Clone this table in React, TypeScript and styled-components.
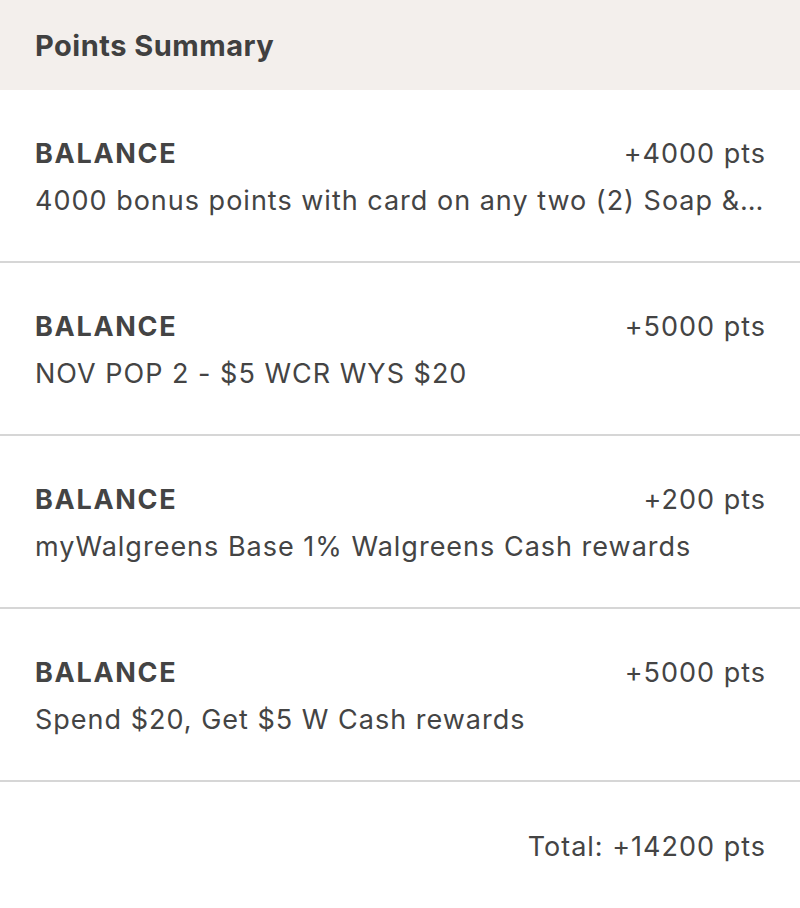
import styled, { createGlobalStyle } from "styled-components";

const GlobalStyle = createGlobalStyle`
  body {
    margin: 0;
    background: #ffffff;
    font-family: Inter, "Noto Sans", sans-serif;
    color: #444444;
  }
`;

type Entry = {
  label: string;
  points: number;
  description: string;
};

const entries: Entry[] = [
  {
    label: "BALANCE",
    points: 4000,
    description: "4000 bonus points with card on any two (2) Soap & Body Wash",
  },
  { label: "BALANCE", points: 5000, description: "NOV POP 2 - $5 WCR WYS $20" },
  {
    label: "BALANCE",
    points: 200,
    description: "myWalgreens Base 1% Walgreens Cash rewards",
  },
  {
    label: "BALANCE",
    points: 5000,
    description: "Spend $20, Get $5 W Cash rewards",
  },
];

export default function App() {
  const total = entries.reduce((sum, e) => sum + e.points, 0);

  return (
    <>
      <GlobalStyle />
      <Container>
        <Header>
          <Title>Points Summary</Title>
        </Header>
        <List>
          {entries.map((item, index) => (
            <Row key={index}>
              <TopLine>
                <Label>{item.label}</Label>
                <Points>+{item.points} pts</Points>
              </TopLine>
              <Description>{item.description}</Description>
            </Row>
          ))}
        </List>
        <Footer>Total: +{total} pts</Footer>
      </Container>
    </>
  );
}

const Container = styled.section`
  width: 800px;
  display: flex;
  flex-direction: column;
`;

const Header = styled.header`
  height: 90px;
  background-color: #f3efec;
  display: flex;
  align-items: center;
  padding: 0 35px;
  box-sizing: border-box;
`;

const Title = styled.h2`
  margin: 0;
  font-size: 29px;
  font-weight: 700;
  letter-spacing: 0.5px;
  color: #404040;
`;

const List = styled.div`
  display: flex;
  flex-direction: column;
`;

const Row = styled.div`
  height: 173px;
  box-sizing: border-box;
  padding: 47px 35px 0;
  border-bottom: 2px solid #d6d6d6;
  display: flex;
  flex-direction: column;
  gap: 14px;
`;

const TopLine = styled.div`
  display: flex;
  justify-content: space-between;
  align-items: baseline;
`;

const Label = styled.span`
  font-size: 27px;
  font-weight: 700;
  letter-spacing: 1.7px;
  color: #444444;
`;

const Points = styled.span`
  font-size: 27px;
  font-weight: 400;
  letter-spacing: 1px;
  margin-right: -1px;
  color: #444444;
`;

const Description = styled.div`
  font-size: 27px;
  letter-spacing: 1px;
  color: #444444;
  white-space: nowrap;
  overflow: hidden;
  text-overflow: ellipsis;
`;

const Footer = styled.div`
  padding: 48px 34px 0 35px;
  text-align: right;
  font-size: 27px;
  letter-spacing: 1px;
  color: #444444;
`;
